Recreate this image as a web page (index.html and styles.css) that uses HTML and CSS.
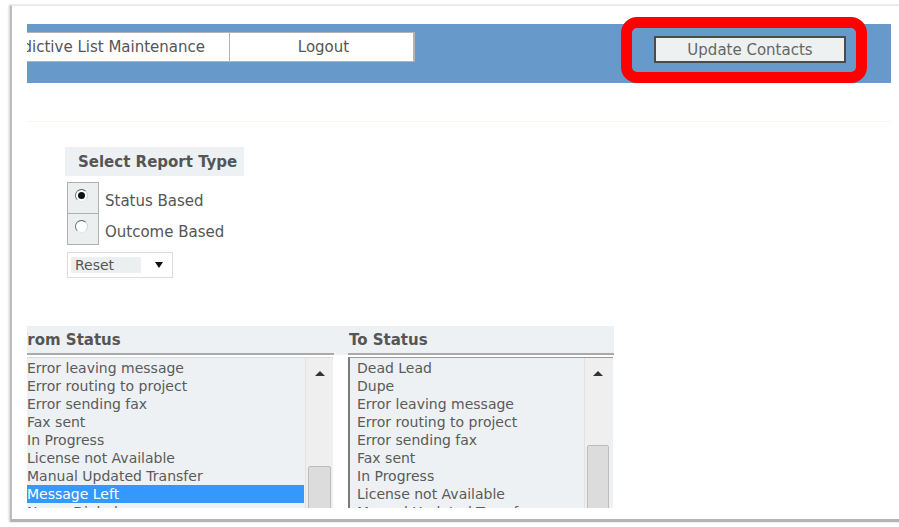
FILE: index.html
```html
<!DOCTYPE html>
<html lang="en">
<head>
<meta charset="utf-8">
<title>Update Contacts</title>
<link rel="stylesheet" href="styles.css">
</head>
<body>
<div class="sheet">
  <div class="viewport">
    <div class="navbar">
      <div class="tab tab-first">Predictive List Maintenance</div>
      <div class="tab tab-logout">Logout</div>
      <button class="update-btn" type="button">Update Contacts</button>
    </div>

    <div class="rule"></div>

    <section class="report-type">
      <div class="panel-title">Select Report Type</div>
      <div class="radio-row">
        <span class="radio-cell"><span class="radio checked"></span></span>
        <span class="radio-label">Status Based</span>
      </div>
      <div class="radio-row">
        <span class="radio-cell"><span class="radio"></span></span>
        <span class="radio-label">Outcome Based</span>
      </div>
      <div class="select-box">
        <span class="select-value">Reset</span>
        <span class="select-caret"></span>
      </div>
    </section>

    <section class="status">
      <div class="status-head">
        <div class="col-head col-from">From Status</div>
        <div class="col-head col-to">To Status</div>
      </div>
      <div class="status-lists">
        <div class="listbox list-from">
          <ul class="items">
            <li>Error leaving message</li>
            <li>Error routing to project</li>
            <li>Error sending fax</li>
            <li>Fax sent</li>
            <li>In Progress</li>
            <li>License not Available</li>
            <li>Manual Updated Transfer</li>
            <li class="selected">Message Left</li>
            <li>Never Dialed</li>
          </ul>
          <div class="scrollbar">
            <span class="arrow-up"></span>
            <span class="thumb thumb-from"></span>
          </div>
        </div>
        <div class="listbox list-to">
          <ul class="items">
            <li>Dead Lead</li>
            <li>Dupe</li>
            <li>Error leaving message</li>
            <li>Error routing to project</li>
            <li>Error sending fax</li>
            <li>Fax sent</li>
            <li>In Progress</li>
            <li>License not Available</li>
            <li>Manual Updated Transfer</li>
          </ul>
          <div class="scrollbar">
            <span class="arrow-up"></span>
            <span class="thumb thumb-to"></span>
          </div>
        </div>
      </div>
    </section>
  </div>
</div>
<div class="callout"></div>
</body>
</html>
```

FILE: styles.css
```css
html, body {
  margin: 0;
  background: #ffffff;
}

body {
  padding: 5px 0 0 10px;
  width: 899px;
  height: 527px;
  box-sizing: border-box;
  overflow: hidden;
  font-family: "DejaVu Sans", Verdana, sans-serif;
  color: #5a5a5a;
}

/* page sheet with its soft edge; the right side runs on past the window */
.sheet {
  width: 896px;
  height: 517px;
  box-sizing: border-box;
  padding-left: 15px;
  border-top: 1px solid #e8e8e8;
  border-left: 2px solid #bcbcbc;
  border-bottom: 3px solid #b4b4b4;
  box-shadow: -1px 0 2px rgba(0, 0, 0, 0.2);
}

.viewport {
  width: 864px;
  height: 502px;
  overflow: hidden;
}

/* top navigation bar */
.navbar {
  margin-top: 18px;
  height: 59px;
  box-sizing: border-box;
  padding-top: 8px;
  background: #6899cb;
  display: flex;
  align-items: flex-start;
}

.tab {
  height: 30px;
  box-sizing: border-box;
  background: #ffffff;
  border: 1px solid #b3b3b3;
  font-size: 15px;
  line-height: 28px;
  color: #555;
  white-space: nowrap;
  overflow: hidden;
}

.tab-first {
  width: 244px;
  margin-left: -41px;
  text-align: right;
  padding-right: 24px;
}

.tab-logout {
  width: 185px;
  border-left: none;
  border-right-width: 2px;
  text-align: center;
  padding-left: 4px;
}

.update-btn {
  margin: 4px 45px 0 auto;
  width: 192px;
  height: 27px;
  box-sizing: border-box;
  border: 2px solid #4b4b4b;
  background: #eef1f2;
  font-family: "DejaVu Sans", Verdana, sans-serif;
  font-size: 15px;
  color: #666;
  padding: 0;
  line-height: 22px;
}

.rule {
  margin-top: 38px;
  height: 1px;
  background: #f6f6ea;
}

/* report type chooser */
.report-type {
  margin: 25px 0 0 38px;
}

.panel-title {
  width: 179px;
  height: 29px;
  box-sizing: border-box;
  padding-left: 13px;
  background: #eef1f3;
  font-weight: bold;
  font-size: 15px;
  line-height: 31px;
  color: #555;
  white-space: nowrap;
  overflow: hidden;
}

.radio-row {
  display: flex;
  margin-left: 2px;
}

.panel-title + .radio-row {
  margin-top: 6px;
}

.radio-row + .radio-row {
  margin-top: -1px;
}

.radio-cell {
  width: 32px;
  height: 32px;
  box-sizing: border-box;
  border: 1px solid #b0b0b0;
  background: #eceff0;
  padding: 6px 0 0 7px;
}

.radio {
  display: block;
  width: 13px;
  height: 13px;
  box-sizing: border-box;
  border-radius: 50%;
  border: 1px solid;
  border-color: #5e5e5e #d0d0d0 #e6e6e6 #6a6a6a;
  background: #ffffff;
  position: relative;
}

.radio.checked::after {
  content: "";
  position: absolute;
  left: 2px;
  top: 2px;
  width: 7px;
  height: 7px;
  border-radius: 50%;
  background: #111;
}

.radio-label {
  margin-left: 6px;
  padding-top: 10px;
  font-size: 15px;
  line-height: 18px;
  color: #555;
}

.select-box {
  margin: 7px 0 0 2px;
  width: 106px;
  height: 26px;
  box-sizing: border-box;
  border: 1px solid #dcdcdc;
  background: #fff;
  display: flex;
  align-items: center;
  padding-left: 3px;
}

.select-value {
  width: 70px;
  height: 16px;
  box-sizing: border-box;
  padding-left: 4px;
  background: #eceff0;
  font-size: 14px;
  line-height: 16px;
  color: #555;
}

.select-caret {
  margin-left: 14px;
  width: 0;
  height: 0;
  border-left: 4px solid transparent;
  border-right: 4px solid transparent;
  border-top: 6px solid #111;
}

/* from / to status lists */
.status {
  margin: 48px 0 0 -9px;
}

.status-head {
  display: flex;
  gap: 14px;
  width: 596px;
  background: #eef1f3;
}

.col-head {
  height: 29px;
  box-sizing: border-box;
  border-bottom: 2px solid #a9a9a9;
  font-weight: bold;
  font-size: 15px;
  line-height: 29px;
  color: #555;
  white-space: nowrap;
}

.col-from {
  width: 316px;
}

.col-to {
  width: 266px;
  padding-left: 1px;
}

.status-lists {
  display: flex;
  gap: 15px;
  margin-top: 2px;
}

.listbox {
  height: 170px;
  box-sizing: border-box;
  background: #eef1f3;
  display: flex;
}

.list-from {
  width: 315px;
  border-top: 1px solid #dcdcdc;
}

.list-to {
  width: 265px;
  border-top: 1px solid #9a9a9a;
  border-left: 2px solid #7a7a7a;
}

.items {
  list-style: none;
  margin: 0;
  padding: 1px 0 0;
  flex: 1;
  min-width: 0;
  font-size: 14px;
  line-height: 18px;
  color: #5a5a5a;
  white-space: nowrap;
}

.list-from .items li {
  padding-left: 9px;
}

.list-to .items li {
  padding-left: 7px;
}

.items li.selected {
  background: #3399ff;
  color: #ffffff;
  margin-right: 1px;
}

.scrollbar {
  position: relative;
  background: #efefef;
  border-left: 1px solid #e2e2e2;
}

.list-from .scrollbar {
  width: 27px;
}

.list-to .scrollbar {
  width: 26px;
  margin-right: 2px;
}

.arrow-up {
  position: absolute;
  left: 50%;
  top: 13px;
  margin-left: -5px;
  width: 0;
  height: 0;
  border-left: 5px solid transparent;
  border-right: 5px solid transparent;
  border-bottom: 5px solid #333;
}

.thumb {
  position: absolute;
  left: 2px;
  right: 2px;
  height: 120px;
  box-sizing: border-box;
  background: #dcdcdc;
  border: 1px solid #bcbcbc;
  border-radius: 2px;
}

.thumb-from {
  top: 108px;
}

.thumb-to {
  top: 87px;
}

/* red highlight drawn over the action button */
.callout {
  position: absolute;
  left: 621px;
  top: 17px;
  width: 246px;
  height: 66px;
  box-sizing: border-box;
  border: 11px solid #ff0000;
  border-radius: 16px;
}
```
